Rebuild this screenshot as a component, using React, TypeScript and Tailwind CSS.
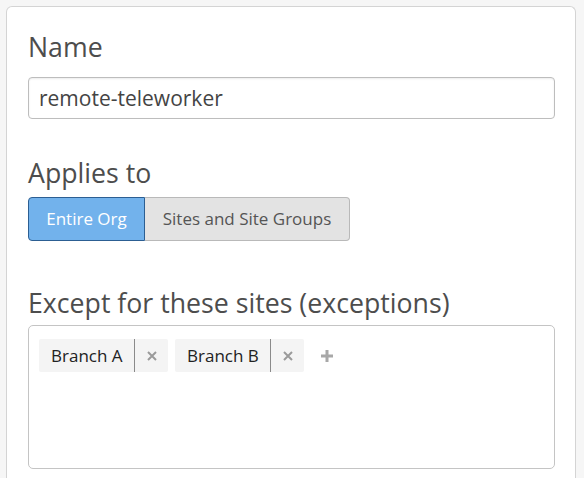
import React, { useState } from 'react';

const FONT = "font-['Open_Sans',_'Liberation_Sans',_sans-serif]";

const SCOPES = ['Entire Org', 'Sites and Site Groups'] as const;

const CloseIcon: React.FC = () => (
  <svg width="10" height="10" viewBox="0 0 10 10" className="text-[#9a9a9a]">
    <path d="M1 1L9 9M9 1L1 9" stroke="currentColor" strokeWidth="2" />
  </svg>
);

const PlusIcon: React.FC = () => (
  <svg width="12" height="12" viewBox="0 0 12 12" className="text-[#a8a8a8]">
    <path d="M6 0V12M0 6H12" stroke="currentColor" strokeWidth="3" />
  </svg>
);

const Tag: React.FC<{ label: string }> = ({ label }) => (
  <div className="flex h-[33px] items-stretch rounded-[2px] bg-[#f4f4f4]">
    <span className="flex items-center pl-3 pr-[11px] text-[17px] text-[#222]">{label}</span>
    <span className="w-[1.5px] bg-[#8a8a8a]" />
    <button className="flex w-[33px] items-center justify-center">
      <CloseIcon />
    </button>
  </div>
);

const App: React.FC = () => {
  const [scope, setScope] = useState<(typeof SCOPES)[number]>('Entire Org');
  const [name, setName] = useState('remote-teleworker');
  const [exceptions] = useState(['Branch A', 'Branch B']);

  return (
    <div className={`min-h-[478px] bg-[#f6f6f6] pl-[6px] pr-2 pt-[6px] ${FONT}`}>
      <div className="min-h-[480px] rounded-t-[6px] border border-b-0 border-[#d4d4d4] bg-white pl-[21px] pr-5 pt-[23px]">
        <label className="block text-[26.7px] leading-[34px] text-[#4d4d4d]">Name</label>
        <input
          value={name}
          onChange={(e) => setName(e.target.value)}
          className="mt-[13px] block h-[42px] w-full rounded-[4px] border border-[#bdbdbd] px-[10px] text-[21px] text-[#444] shadow-[inset_0_1px_2px_rgba(0,0,0,0.08)] outline-none"
        />

        <label className="mt-[37px] block text-[26.7px] leading-[34px] text-[#4d4d4d]">Applies to</label>
        <div className="mt-[7px] flex">
          {SCOPES.map((s, i) => (
            <button
              key={s}
              onClick={() => setScope(s)}
              className={`h-[44px] border text-[17px] ${
                i === 0 ? 'w-[117px] rounded-l-[4px]' : 'w-[205px] rounded-r-[4px] border-l-0'
              } ${
                scope === s
                  ? 'border-[#2c5e92] bg-[#72b2ec] text-white'
                  : 'border-[#b9b9b9] bg-[#e3e3e3] text-[#555]'
              }`}
            >
              {s}
            </button>
          ))}
        </div>

        <label className="mt-[45px] block text-[26.7px] leading-[34px] text-[#4d4d4d]">
          Except for these sites (exceptions)
        </label>
        <div className="mt-[5px] h-[144px] rounded-[5px] border border-[#c4c4c4] pl-[10px] pt-[13px]">
          <div className="flex items-center gap-[7px]">
            {exceptions.map((e) => (
              <Tag key={e} label={e} />
            ))}
            <button className="ml-[10px] flex h-[33px] items-center">
              <PlusIcon />
            </button>
          </div>
        </div>
      </div>
    </div>
  );
};

export default App;
